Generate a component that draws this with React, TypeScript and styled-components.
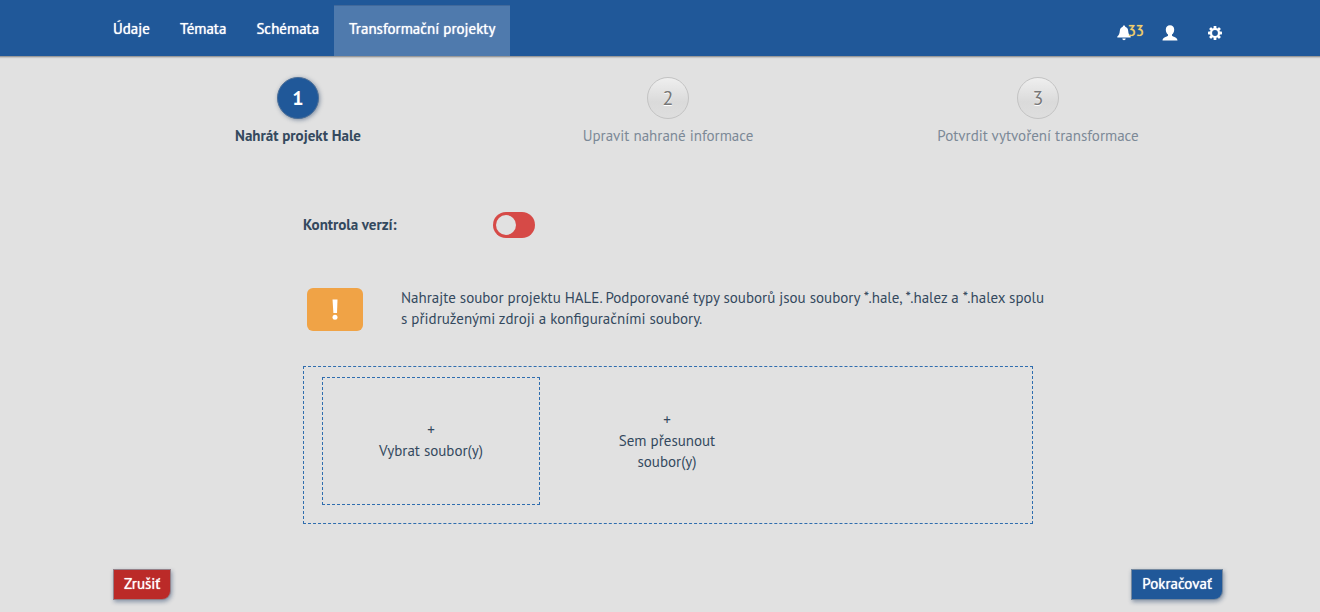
import React, { useState } from "react";
import styled, { createGlobalStyle, css } from "styled-components";

const GlobalStyle = createGlobalStyle`
  *, *::before, *::after { box-sizing: border-box; }
  html, body { margin: 0; background: #e1e1e1; }
  body, button, input {
    font-family: "PT Sans", Lato, "Noto Sans", sans-serif;
    font-size: 15px;
    line-height: 21px;
    color: #34495e;
  }
  button { cursor: pointer; }
`;

const Header = styled.header`
  background: #205899;
  border-bottom: 1px solid #9a9a9a;
  box-shadow: 0 1px 1px rgba(0, 0, 0, 0.12);
  padding-left: 16px;
`;

const HeaderInner = styled.div`
  display: flex;
  justify-content: space-between;
  max-width: 1140px;
  height: 56px;
  margin: 0 auto;
`;

const Nav = styled.nav`
  display: flex;
  padding-top: 6px;
`;

const NavLink = styled.a<{ $active?: boolean }>`
  padding: 12px 15px 0;
  color: #fff;
  text-shadow: 0 0 1px #fff;
  text-decoration: none;
  background: ${(p) => (p.$active ? "#4f7aad" : "transparent")};
  box-shadow: ${(p) => (p.$active ? "0 -1px 0 #41699b" : "none")};
`;

const Tools = styled.div`
  display: flex;
  align-items: center;
  padding: 9px 16px 0 0;
`;

const ToolButton = styled.button<{ $gap?: number }>`
  display: flex;
  align-items: center;
  margin: 0 0 0 ${(p) => p.$gap ?? 0}px;
  padding: 0;
  border: 0;
  background: none;
  color: #fff;
  svg { display: block; }
`;

const Count = styled.span`
  color: #f3cf6b;
  text-shadow: 0 0 1px #f3cf6b;
  line-height: 16px;
  margin: -3px 0 0 -3px;
`;

const Page = styled.main`
  padding: 20px 0 12px 16px;
`;

const Wide = styled.div`
  max-width: 1110px;
  margin: 0 auto;
`;

const Steps = styled.ol`
  display: grid;
  grid-template-columns: repeat(3, 1fr);
  margin: 0;
  padding: 0;
  list-style: none;
`;

const Step = styled.li<{ $active?: boolean }>`
  display: flex;
  flex-direction: column;
  align-items: center;
  gap: 6px;
  color: ${(p) => (p.$active ? "#34495e" : "#7c8997")};
  font-weight: ${(p) => (p.$active ? 700 : 400)};
`;

const StepNumber = styled.span<{ $active?: boolean }>`
  display: flex;
  align-items: center;
  justify-content: center;
  width: 42px;
  height: 42px;
  border-radius: 50%;
  font-size: 20px;
  ${(p) =>
    p.$active
      ? css`
          color: #fff;
          background: #205899;
          border: 1px solid #4a6d96;
          box-shadow: 1px 1px 4px rgba(32, 60, 100, 0.5);
        `
      : css`
          color: #777;
          text-shadow: 0 1px 0 #fff;
          background: linear-gradient(#efefef, #dadada 60%, #dedede);
          border: 1px solid #c3c3c3;
        `}
`;

const Form = styled.form`
  max-width: 730px;
  margin: 66px auto 0;
`;

const SwitchRow = styled.div`
  display: flex;
  align-items: center;
`;

const SwitchLabel = styled.label`
  width: 190px;
  padding-bottom: 2px;
  font-weight: 700;
`;

const Switch = styled.input`
  appearance: none;
  display: flex;
  align-items: center;
  width: 42px;
  height: 26px;
  margin: 0;
  padding: 0 3px;
  border-radius: 13px;
  background: #d64a47;
  cursor: pointer;
  &::before {
    content: "";
    width: 20px;
    height: 20px;
    border-radius: 50%;
    background: #e1e1e1;
  }
  &:checked {
    justify-content: flex-end;
    background: #205899;
  }
`;

const Notice = styled.div`
  display: flex;
  align-items: flex-end;
  gap: 38px;
  margin-top: 49px;
  padding-left: 4px;
`;

const NoticeBadge = styled.span`
  display: flex;
  flex: none;
  align-items: center;
  justify-content: center;
  width: 56px;
  height: 43px;
  border-radius: 6px;
  background: #f0a346;
`;

const NoticeText = styled.p`
  margin: 0 -20px 0 0;
  padding-bottom: 2px;
`;

const DropZone = styled.div`
  display: flex;
  gap: 18px;
  margin-top: 35px;
  padding: 10px 17px 18px 18px;
  border: 1px dashed #2f6dae;
`;

const PickFiles = styled.button`
  width: 218px;
  height: 128px;
  padding: 0 0 2px;
  border: 1px dashed #2f6dae;
  background: none;
`;

const DropHint = styled.div`
  display: flex;
  flex-direction: column;
  justify-content: center;
  width: 218px;
  padding: 0 50px 2px;
  text-align: center;
`;

const Line = styled.span`
  display: block;
`;

const Actions = styled.div`
  display: flex;
  justify-content: space-between;
  margin-top: 45px;
`;

const ActionButton = styled.button<{ $tone: string }>`
  height: 31px;
  padding: 0 10px 2px;
  border: 1px solid rgba(140, 150, 160, 0.8);
  border-radius: 0 0 9px 0;
  background: ${(p) => p.$tone};
  box-shadow: 1px 2px 4px rgba(32, 60, 100, 0.45);
  color: #fff;
  text-shadow: 0 0 1px #fff;
`;

const links = ["Údaje", "Témata", "Schémata", "Transformační projekty"];
const steps = [
  "Nahrát projekt Hale",
  "Upravit nahrané informace",
  "Potvrdit vytvoření transformace",
];

const BellIcon = () => (
  <svg width="14" height="16" viewBox="0 0 14 16" fill="currentColor" aria-hidden="true">
    <path d="M7 0.5c.8 0 1.2.5 1.2 1.2 2 .6 2.8 2.2 3 4.3.2 2.8.9 4.3 2.5 5.5v1H.3v-1c1.6-1.2 2.3-2.7 2.5-5.5.2-2.1 1-3.7 3-4.3C5.8 1 6.2.5 7 .5zM5.3 13.5h3.4a1.7 1.7 0 0 1-3.4 0z" />
  </svg>
);

const UserIcon = () => (
  <svg width="16" height="16" viewBox="0 0 16 16" fill="currentColor" aria-hidden="true">
    <path d="M8 .2c2.6 0 4.2 1.7 4.2 4.4 0 2.3-.9 4.1-2.2 5v1.1c.6.9 5.5 1.3 5.5 4.8H.5c0-3.500 4.900-3.900 5.500-4.800V9.600C4.700 8.700 3.800 6.900 3.800 4.600 3.800 1.900 5.400.2 8 .2z" />
  </svg>
);

const GearIcon = () => (
  <svg width="14" height="14" viewBox="0 0 14 14" aria-hidden="true">
    <g fill="currentColor">
      {[0, 45, 90, 135].map((angle) => (
        <rect key={angle} x="5.6" y="0" width="2.8" height="14" rx=".6" transform={`rotate(${angle} 7 7)`} />
      ))}
      <circle cx="7" cy="7" r="5.1" />
    </g>
    <circle cx="7" cy="7" r="2.9" fill="#205899" />
  </svg>
);

const ExclamationIcon = () => (
  <svg width="8" height="22" viewBox="0 0 8 22" fill="#fff" aria-hidden="true">
    <path d="M1.5 .5h5L6 14H2.4z" />
    <circle cx="4" cy="18.3" r="2.5" />
  </svg>
);

export default function App() {
  const [versioned, setVersioned] = useState(false);

  return (
    <>
      <GlobalStyle />
      <Header>
        <HeaderInner>
          <Nav>
            {links.map((label, i) => (
              <NavLink key={label} href="#" $active={i === 3}>
                {label}
              </NavLink>
            ))}
          </Nav>
          <Tools>
            <ToolButton type="button">
              <BellIcon />
              <Count>33</Count>
            </ToolButton>
            <ToolButton type="button" $gap={18} aria-label="Profil">
              <UserIcon />
            </ToolButton>
            <ToolButton type="button" $gap={30} aria-label="Nastavení">
              <GearIcon />
            </ToolButton>
          </Tools>
        </HeaderInner>
      </Header>
      <Page>
        <Wide>
          <Steps>
            {steps.map((label, i) => (
              <Step key={label} $active={i === 0}>
                <StepNumber $active={i === 0}>{i + 1}</StepNumber>
                {label}
              </Step>
            ))}
          </Steps>
          <Form>
            <SwitchRow>
              <SwitchLabel htmlFor="versioned">Kontrola verzí:</SwitchLabel>
              <Switch
                id="versioned"
                type="checkbox"
                checked={versioned}
                onChange={(e) => setVersioned(e.target.checked)}
              />
            </SwitchRow>
            <Notice>
              <NoticeBadge>
                <ExclamationIcon />
              </NoticeBadge>
              <NoticeText>
                Nahrajte soubor projektu HALE. Podporované typy souborů jsou soubory *.hale, *.halez a *.halex spolu
                s přidruženými zdroji a konfiguračními soubory.
              </NoticeText>
            </Notice>
            <DropZone>
              <PickFiles type="button">
                <Line>+</Line>
                <Line>Vybrat soubor(y)</Line>
              </PickFiles>
              <DropHint>
                <Line>+</Line>
                <Line>Sem přesunout soubor(y)</Line>
              </DropHint>
            </DropZone>
          </Form>
          <Actions>
            <ActionButton type="button" $tone="#bb2a28">Zrušiť</ActionButton>
            <ActionButton type="button" $tone="#205899">Pokračovať</ActionButton>
          </Actions>
        </Wide>
      </Page>
    </>
  );
}
